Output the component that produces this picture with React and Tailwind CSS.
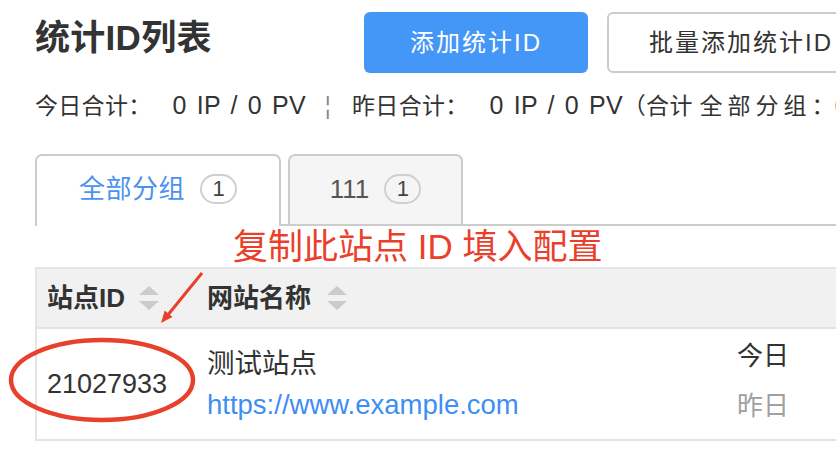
import React from 'react'

function SortIcon({ className = '' }) {
  return (
    <svg className={className} width="20" height="24" viewBox="0 0 20 24" aria-hidden="true">
      <path d="M10 0 L20 9 L0 9 Z" fill="#cbcbcb" />
      <path d="M0 15 L20 15 L10 24 Z" fill="#cbcbcb" />
    </svg>
  )
}

function Badge({ children }) {
  return (
    <span className="ml-[15px] inline-flex h-[30px] w-[37px] items-center justify-center rounded-full border-2 border-[#cfcfcf] text-[22px] leading-none text-[#444]">
      {children}
    </span>
  )
}

function Count({ children }) {
  return <span className="ml-[21px] text-[25px] tracking-[0.2px] [word-spacing:3px]">{children}</span>
}

export default function App() {
  return (
    <div className="relative h-[456px] w-[836px] overflow-hidden bg-white font-['Liberation_Sans','Noto_Sans_CJK_SC',sans-serif] text-[#333]">
      <div className="w-[1100px] pl-[35px] pt-[12px]">
        <header className="flex items-start">
          <h1 className="w-[329px] pt-[4px] text-[35px] font-bold leading-[44px] tracking-[0.3px] text-[#333]">统计ID列表</h1>
          <div className="flex gap-[19px]">
            <button className="h-[61px] w-[224px] rounded-[6px] bg-[#4497f6] text-[24px] tracking-[2px] text-white">添加统计ID</button>
            <button className="h-[61px] whitespace-nowrap rounded-[6px] border-2 border-[#cccccc] bg-white px-[40px] text-[24px] tracking-[2px] text-[#333]">
              批量添加统计ID
            </button>
          </div>
        </header>

        <p className="mt-[17px] flex items-baseline whitespace-nowrap text-[23px] leading-[30px] tracking-[0.3px]">
          <span>今日合计：</span>
          <Count>0 IP / 0 PV</Count>
          <span className="ml-[19px] text-[#888]">¦</span>
          <span className="ml-[21px]">昨日合计：</span>
          <Count>0 IP / 0 PV</Count>
          <span>（合计 <span className="tracking-[5px]">全部分组</span>：0 IP / 0 PV）</span>
        </p>

        <div className="mt-[33px] flex items-end">
          <div className="flex h-[72px] w-[246px] items-center justify-center rounded-t-[7px] border-2 border-b-0 border-[#cccccc] bg-white pb-[4px]">
            <span className="text-[26px] tracking-[0.5px] text-[#4a92ee]">全部分组</span>
            <Badge>1</Badge>
          </div>
          <div className="h-[72px] w-[7px] border-b-2 border-[#cccccc]" />
          <div className="flex h-[72px] w-[175px] items-center justify-center rounded-t-[7px] border-2 border-[#cccccc] bg-[#f5f5f5] pb-[2px]">
            <span className="text-[26px] text-[#555]">111</span>
            <Badge>1</Badge>
          </div>
          <div className="h-[72px] flex-1 border-b-2 border-[#cccccc]" />
        </div>

        <div className="h-[41px] pl-[198px] text-[35px] leading-[41px] text-[#ea402b]">复制此站点 ID 填入配置</div>

        <div className="border-l-2 border-t-2 border-[#e3e3e8]">
          <div className="flex h-[60px] items-center border-b-2 border-[#e3e3e8] bg-[#f1f1f1] text-[26px] font-bold">
            <div className="flex w-[160px] items-center pl-[10px]">
              <span>站点ID</span>
              <SortIcon className="ml-[14px]" />
            </div>
            <div className="flex items-center pl-[10px]">
              <span>网站名称</span>
              <SortIcon className="ml-[16px]" />
            </div>
          </div>
          <div className="flex h-[112px] items-center border-b-2 border-[#e3e3e8] text-[26px]">
            <div className="w-[160px] pl-[10px] text-[27px]">21027933</div>
            <div className="w-[530px] pl-[10px] text-[27.5px] leading-[41px]">
              <div>测试站点</div>
              <div className="text-[#3f8ef2]">https://www.example.com</div>
            </div>
            <div className="pb-[6px] pl-[10px] leading-[50px]">
              <div>今日</div>
              <div className="text-[#a0a0a0]">昨日</div>
            </div>
          </div>
        </div>
      </div>

      <svg className="pointer-events-none absolute inset-0" width="836" height="456" aria-hidden="true">
        <ellipse cx="102" cy="380" rx="91" ry="40" fill="none" stroke="#e8412b" strokeWidth="4.5" />
        <line x1="202" y1="273" x2="167" y2="316" stroke="#e8412b" strokeWidth="3" />
        <path d="M161 323 L172.5 316.9 L164.7 310.5 Z" fill="#e8412b" />
      </svg>
    </div>
  )
}
